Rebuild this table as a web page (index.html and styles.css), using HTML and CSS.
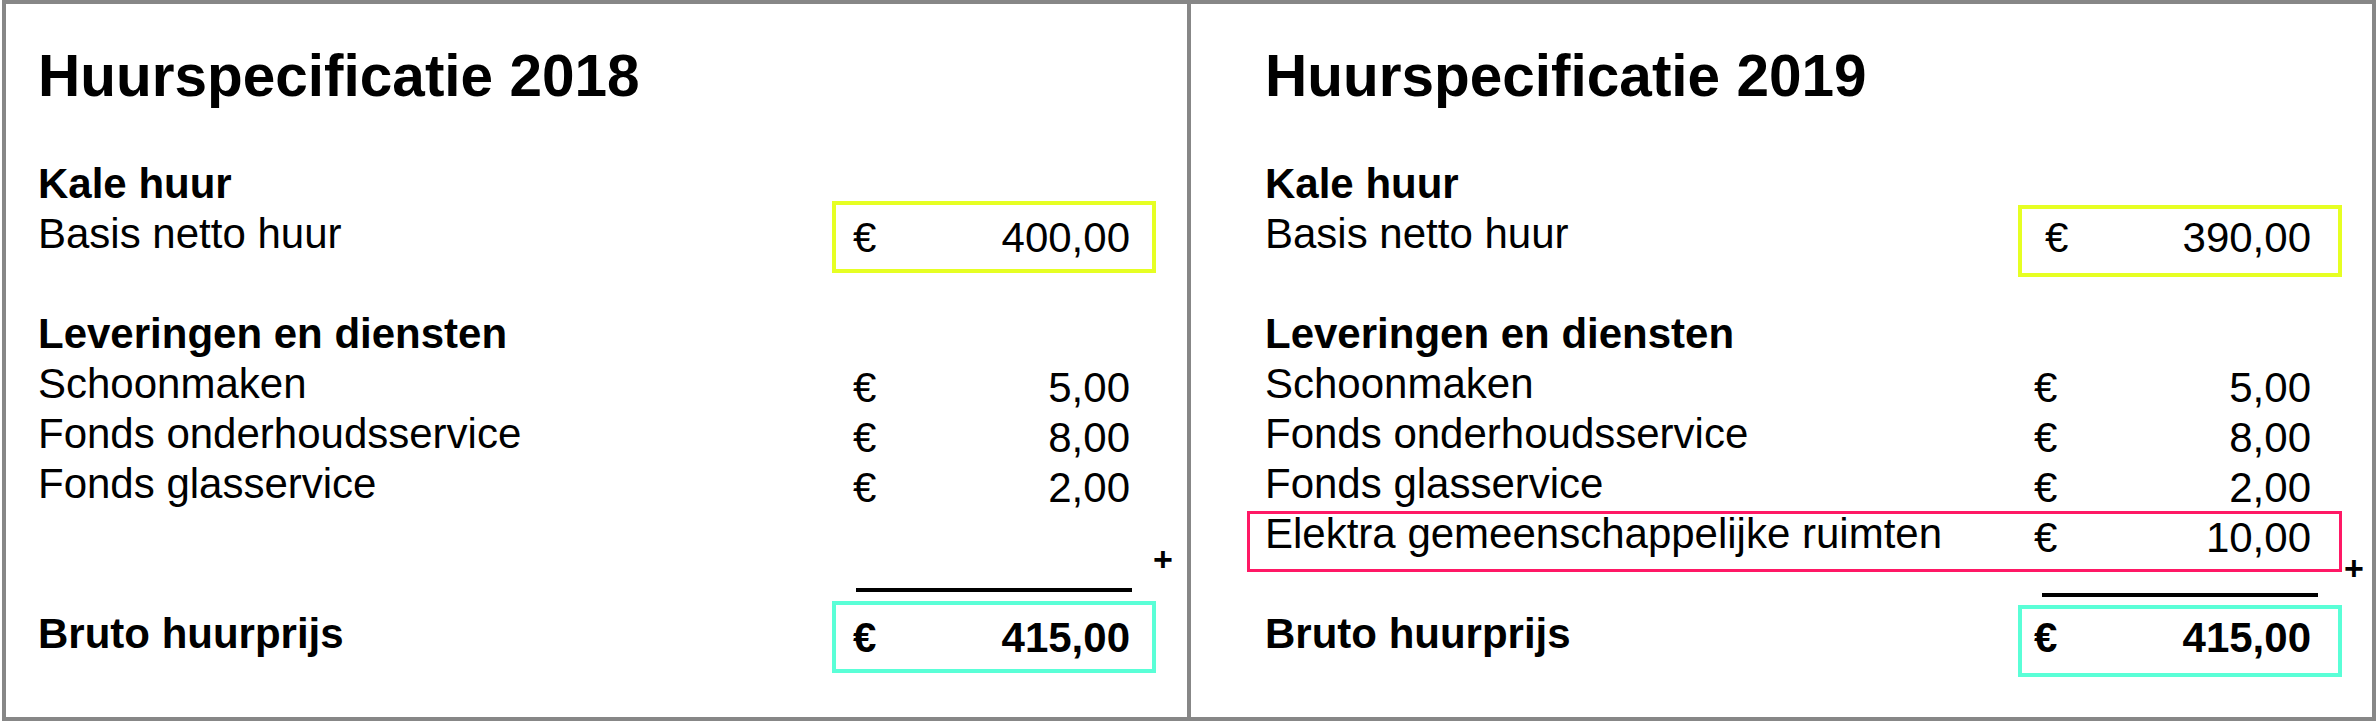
FILE: index.html
```html
<!DOCTYPE html>
<html lang="nl">
<head>
<meta charset="utf-8">
<title>Huurspecificatie</title>
<link rel="stylesheet" href="styles.css">
</head>
<body>
<div class="frame">
  <section class="panel panel-2018">
    <h1 class="title">Huurspecificatie 2018</h1>
    <div class="group">
      <div class="row head"><span class="label">Kale huur</span></div>
      <div class="row"><span class="label">Basis netto huur</span><div class="amount box-yellow"><span>€</span><span>400,00</span></div></div>
    </div>
    <div class="group group-2">
      <div class="row head"><span class="label">Leveringen en diensten</span></div>
      <div class="row"><span class="label">Schoonmaken</span><div class="amount"><span>€</span><span>5,00</span></div></div>
      <div class="row"><span class="label">Fonds onderhoudsservice</span><div class="amount"><span>€</span><span>8,00</span></div></div>
      <div class="row"><span class="label">Fonds glasservice</span><div class="amount"><span>€</span><span>2,00</span></div></div>
      <div class="row"></div>
    </div>
    <div class="sum"><div class="sum-line"></div><span class="plus">+</span></div>
    <div class="row total"><span class="label">Bruto huurprijs</span><div class="amount box-cyan"><span>€</span><span>415,00</span></div></div>
  </section>
  <section class="panel panel-2019">
    <h1 class="title">Huurspecificatie 2019</h1>
    <div class="group">
      <div class="row head"><span class="label">Kale huur</span></div>
      <div class="row"><span class="label">Basis netto huur</span><div class="amount box-yellow low wide-euro"><span>€</span><span>390,00</span></div></div>
    </div>
    <div class="group group-2">
      <div class="row head"><span class="label">Leveringen en diensten</span></div>
      <div class="row"><span class="label">Schoonmaken</span><div class="amount"><span>€</span><span>5,00</span></div></div>
      <div class="row"><span class="label">Fonds onderhoudsservice</span><div class="amount"><span>€</span><span>8,00</span></div></div>
      <div class="row"><span class="label">Fonds glasservice</span><div class="amount"><span>€</span><span>2,00</span></div></div>
      <div class="row highlight"><span class="label">Elektra gemeenschappelijke ruimten</span><div class="amount"><span>€</span><span>10,00</span></div></div>
    </div>
    <div class="sum"><div class="sum-line"></div><span class="plus">+</span></div>
    <div class="row total"><span class="label">Bruto huurprijs</span><div class="amount box-cyan low"><span>€</span><span>415,00</span></div></div>
  </section>
</div>
</body>
</html>
```

FILE: styles.css
```css
html, body {
  margin: 0;
  padding: 0;
  background: #ffffff;
}

body {
  font-family: "Liberation Sans", Arial, sans-serif;
  color: #000000;
}

.frame {
  box-sizing: border-box;
  margin-left: 2px;
  width: 2374px;
  height: 721px;
  border: 4px solid #878787;
  display: grid;
  grid-template-columns: 1185px 1181px;
}

.panel {
  box-sizing: border-box;
  padding-top: 37px;
  padding-left: var(--pad-left);
}

.panel-2018 {
  --pad-left: 32px;
  --label-w: 794px;
  --amt-pl: 17px;
  --amt-pr: 22px;
  --line-top: 29px;
  --plus-top: -17px;
  --plus-left: 321px;
  border-right: 4px solid #878787;
}

.panel-2019 {
  --pad-left: 74px;
  --label-w: 753px;
  --amt-pl: 12px;
  --amt-pr: 27px;
  --line-top: 34px;
  --plus-top: -8.5px;
  --plus-left: 326px;
}

.title {
  margin: 0;
  font-size: 58.5px;
  font-weight: 700;
  line-height: 70px;
}

.group {
  margin-top: 48px;
}

.group-2 {
  margin-top: 50px;
}

.row {
  position: relative;
  display: grid;
  grid-template-columns: var(--label-w) 324px;
  grid-template-rows: 50px;
  width: calc(var(--label-w) + 324px);
  height: 50px;
  font-size: 42px;
  line-height: 50px;
  white-space: nowrap;
}

.head,
.total {
  font-weight: 700;
}

.amount {
  box-sizing: border-box;
  height: 72px;
  margin-top: -7.8px;
  border: 4px solid transparent;
  padding: 7.8px var(--amt-pr) 0 var(--amt-pl);
  display: flex;
  justify-content: space-between;
  line-height: 50px;
}

.amount.low {
  margin-top: -3.8px;
  padding-top: 3.8px;
}

.amount.wide-euro {
  padding-left: calc(var(--amt-pl) + 11px);
}

.box-yellow {
  border-color: #e6ff23;
}

.box-cyan {
  border-color: #5affd7;
}

.highlight::after {
  content: "";
  position: absolute;
  left: -18px;
  right: 0;
  top: 2px;
  bottom: -13px;
  border: 3px solid #ff1865;
  pointer-events: none;
}

.sum {
  position: relative;
  display: grid;
  grid-template-columns: var(--label-w) 324px;
  width: calc(var(--label-w) + 324px);
  height: 49.5px;
}

.sum-line {
  grid-column: 2;
  height: 4px;
  margin: var(--line-top) 24px 0 24px;
  background: #000000;
}

.plus {
  position: absolute;
  top: var(--plus-top);
  left: calc(var(--label-w) + var(--plus-left));
  font-size: 34px;
  font-weight: 700;
  line-height: 34px;
}
```
